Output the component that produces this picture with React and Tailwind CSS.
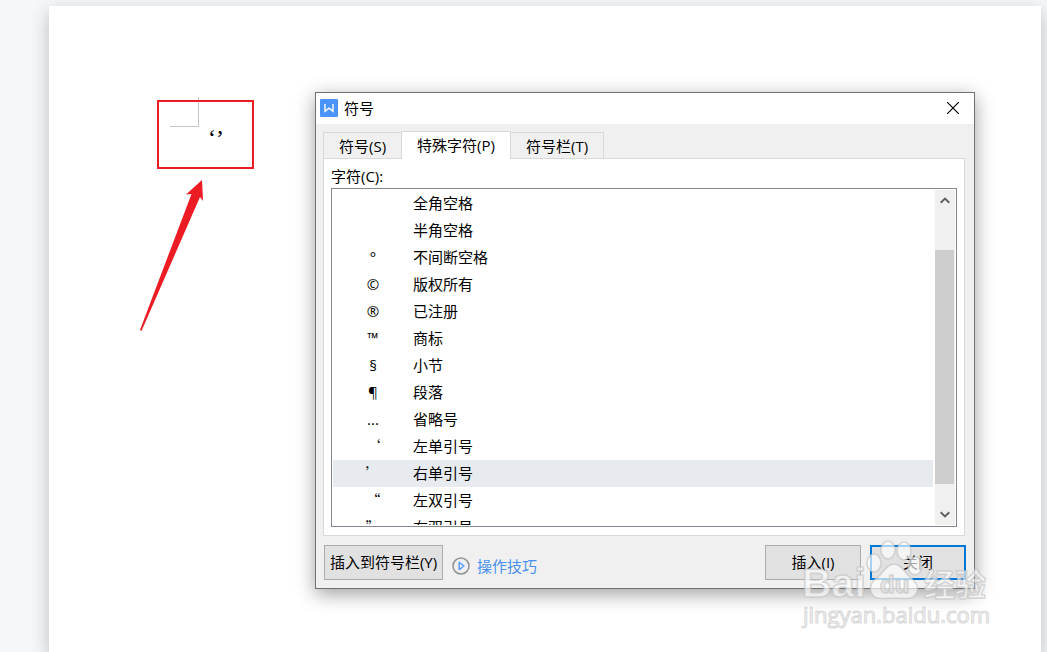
import React, { useState } from 'react';

const TABS = [
    { id: 'symbol', label: '符号(S)' },
    { id: 'special', label: '特殊字符(P)' },
    { id: 'bar', label: '符号栏(T)' },
];

const ROWS = [
    { char: '', name: '全角空格' },
    { char: '', name: '半角空格' },
    { char: '°', name: '不间断空格' },
    { char: '©', name: '版权所有' },
    { char: '®', name: '已注册' },
    { char: '™', name: '商标' },
    { char: '§', name: '小节' },
    { char: '¶', name: '段落' },
    { char: '...', name: '省略号' },
    { char: '‘', name: '左单引号', wide: true },
    { char: '’', name: '右单引号', wide: true },
    { char: '“', name: '左双引号', wide: true },
    { char: '”', name: '右双引号', wide: true },
];

const WriterLogo = () => (
    <svg viewBox="0 0 18 18" className="size-[18px]" aria-hidden="true">
        <rect width="18" height="18" rx="1" fill="#4a94f7" />
        <path d="M5 5v7.4l4-3.2 4 3.2V5" fill="none" stroke="#fff" strokeWidth="1.4" />
    </svg>
);

const CloseIcon = () => (
    <svg viewBox="0 0 12 12" className="size-3" aria-hidden="true">
        <path d="M0 0l12 12M12 0L0 12" stroke="#000" strokeWidth="1.2" />
    </svg>
);

const PlayIcon = () => (
    <svg viewBox="0 0 18 18" className="size-[18px]" fill="none" aria-hidden="true">
        <circle cx="9" cy="9" r="8" stroke="#949494" strokeWidth="1.6" />
        <path d="M7.2 5.4v7.2L12 9z" stroke="#5b9bf5" strokeWidth="1.5" strokeLinejoin="round" />
    </svg>
);

const Chevron = ({ down }) => (
    <svg viewBox="0 0 10 7" className={`h-[7px] w-2.5 ${down ? 'rotate-180' : ''}`} aria-hidden="true">
        <path d="M.7 5.8 5 1.6l4.3 4.2" fill="none" stroke="#606060" strokeWidth="2" />
    </svg>
);

const Annotation = () => (
    <>
        {/* page margin corner */}
        <div className="absolute left-[121px] top-[91px] h-[30px] w-[29px] border-r border-b border-[#c6c6c6]" />
        <div className="absolute left-[108px] top-[94px] h-[69px] w-[97px] border-2 border-[#ed1c24]" />
        <p className="absolute left-[159px] top-[120px] font-['Liberation_Serif',serif] text-2xl leading-6 text-black">‘’</p>
        <svg viewBox="0 0 64 152" className="absolute left-[91px] top-[174px] h-[152px] w-16" aria-hidden="true">
            <path d="M62 0 46 14.5l5.5-.5L0 150l1.5 1L60 17l3 4z" fill="#ed1c24" />
        </svg>
    </>
);

const Watermark = () => (
    <svg
        viewBox="0 0 196 100"
        className="pointer-events-none absolute right-[48px] top-[530px] h-[100px] w-[196px] font-['Liberation_Sans','Noto_Sans_CJK_SC',sans-serif]"
        fill="#ffffff"
        fillOpacity="0.65"
        stroke="#c0c0c0"
        strokeOpacity="0.6"
        strokeWidth="1.6"
        strokeLinejoin="round"
        aria-hidden="true"
    >
        <text x="5" y="61" fontSize="41" fontWeight="700">Bai</text>
        <ellipse cx="77" cy="27" rx="7" ry="9" />
        <ellipse cx="91" cy="14" rx="7" ry="9" />
        <ellipse cx="107" cy="15" rx="7" ry="9" />
        <ellipse cx="118" cy="30" rx="7" ry="9" />
        <path d="M97 28c-7 0-10 8-16 13-6 4-9 9-7 15 3 9 14 6 23 6s20 3 23-6c2-6-2-11-7-15-6-5-9-13-16-13z" />
        <text x="83" y="57" fontSize="24" fontWeight="700" fill="#e4e4e4">du</text>
        <text x="127" y="60" fontSize="31" fontWeight="700">经验</text>
        <text x="6" y="87" fontSize="22" strokeWidth="1.2" className="font-['Open_Sans',sans-serif]">jingyan.baidu.com</text>
    </svg>
);

const ScrollBar = () => (
    <div className="flex w-5 shrink-0 flex-col bg-[#f0f0f0]">
        <button className="flex h-5 w-[19px] items-center justify-center" aria-label="向上滚动">
            <Chevron />
        </button>
        <div className="flex-1 pt-10 pb-5">
            <div className="h-full w-[19px] bg-[#cdcdcd]" />
        </div>
        <button className="flex h-[21px] w-[19px] items-center justify-center" aria-label="向下滚动">
            <Chevron down />
        </button>
    </div>
);

const SymbolDialog = () => {
    const [tab, setTab] = useState('special');
    const [selected, setSelected] = useState(10);

    return (
        <section
            role="dialog"
            aria-labelledby="dialog-title"
            className="absolute left-[266px] right-[66px] top-[86px] border border-[#717171] bg-[#f0f0f0] shadow-[0_5px_18px_rgba(0,0,0,0.38)]"
        >
            <header className="flex h-[31px] items-center bg-white pb-0.5 pl-1 pr-3">
                <WriterLogo />
                <h1 id="dialog-title" className="ml-1.5 flex-1">符号</h1>
                <button className="flex size-[18px] items-center justify-center" aria-label="关闭窗口">
                    <CloseIcon />
                </button>
            </header>

            <div className="pl-[7px] pr-[9px] pt-[7px] pb-2">
                {/* Tabs */}
                <div role="tablist" className="flex items-end">
                    {TABS.map(({ id, label }) => (
                        <button
                            key={id}
                            role="tab"
                            aria-selected={tab === id}
                            onClick={() => setTab(id)}
                            className={`border-[#d9d9d9] ${
                                tab === id
                                    ? 'relative -mb-px h-7 border-x border-t bg-white px-[15px] pb-px'
                                    : 'h-[26px] border-t px-[15px] first:border-l last:border-r'
                            }`}
                        >
                            {label}
                        </button>
                    ))}
                </div>

                {/* Special characters */}
                <div className="border border-[#d9d9d9] bg-white px-[7px] pt-1.5 pb-2">
                    <p id="chars-label" className="h-[23px] leading-[22px]">字符(C):</p>
                    <div className="flex h-[339px] border border-[#828790] p-px">
                        <div className="min-w-0 flex-1 overflow-hidden pr-0.5">
                            <table aria-labelledby="chars-label" className="w-full border-collapse">
                                <tbody>
                                    {ROWS.map(({ char, name, wide }, i) => (
                                        <tr
                                            key={name}
                                            onClick={() => setSelected(i)}
                                            className={`h-[27px] ${selected === i ? 'bg-[#e7ebf0]' : ''}`}
                                        >
                                            <td className={`w-20 p-0 pb-0.5 text-center ${wide ? "font-['Noto_Sans_CJK_SC',sans-serif] font-light" : ''}`}>
                                                {char}
                                            </td>
                                            <td className="p-0 pb-0.5">{name}</td>
                                        </tr>
                                    ))}
                                </tbody>
                            </table>
                        </div>
                        <ScrollBar />
                    </div>
                </div>

                {/* Actions */}
                <footer className="-mr-px mt-[9px] ml-px flex">
                    <button className="h-[35px] w-[119px] border border-[#adadad] bg-[#e1e1e1] pb-0.5">插入到符号栏(Y)</button>
                    <a href="#tips" className="ml-[9px] mt-1.5 flex items-center gap-[7px] text-[#4a90f2]">
                        <PlayIcon />
                        操作技巧
                    </a>
                    <div className="ml-auto flex gap-[9px]">
                        <button className="h-[35px] w-24 border border-[#adadad] bg-[#e1e1e1] pb-0.5">插入(I)</button>
                        <button className="h-[35px] w-24 border-2 border-[#0078d7] bg-[#e1e1e1] pb-0.5">关闭</button>
                    </div>
                </footer>
            </div>
        </section>
    );
};

const App = () => (
    <div className="flex min-h-screen overflow-hidden bg-[#f5f7fa] pl-[49px] pr-1.5 pt-1.5 font-['Open_Sans','Noto_Sans_CJK_SC',sans-serif] text-[15px] leading-5 text-black">
        <main className="relative flex-1 bg-white shadow-[0_6px_18px_rgba(0,0,0,0.24)]">
            <Annotation />
            <SymbolDialog />
            <Watermark />
        </main>
    </div>
);

export default App;
